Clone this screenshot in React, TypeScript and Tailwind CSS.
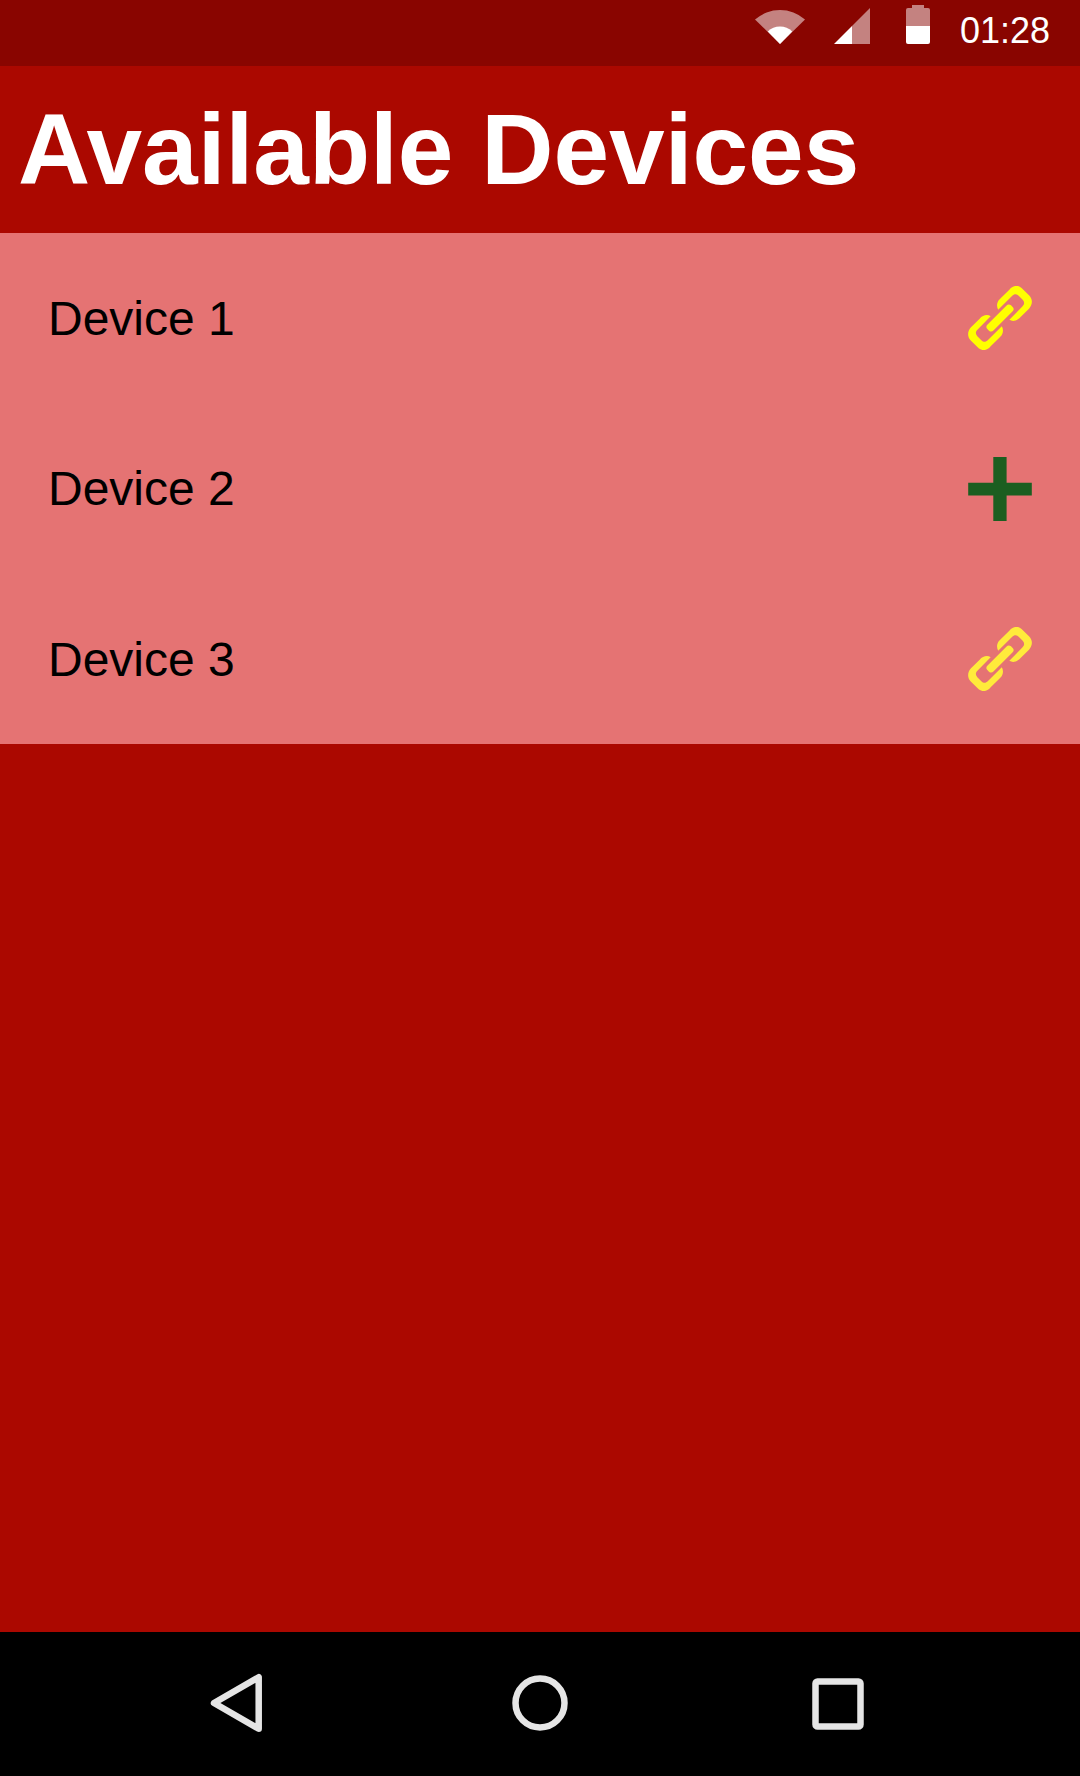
const LINK_HALF =
  'M144.500 119 C140.500 112 140 103 143 97 C145 92 148 89 152 85 L178 59 C189 45 206 44 217 56 L237 76 C249 88 248 104 237 116 L211 142 C202 152 189 156 178 149.500 L217 109.500 C224 103 224 96 218 89.500 L206 77.500 C199 70.500 193 71 186 78 Z';

function LinkIcon({ className }: { className: string }) {
  return (
    <svg viewBox="54 48 192 192" className={className} fill="currentColor">
      <path d={LINK_HALF} />
      <path d={LINK_HALF} transform="rotate(180 150 144)" />
      <path
        d="M169 107 C173 102.500 179 102 183 106 L188 111 C192 115 192 120 188 124 L131 181 C127 185.500 121 186 117 182 L112 177 C108 173 108 168 112 164 Z"
      />
    </svg>
  );
}

function PlusIcon({ className }: { className: string }) {
  return (
    <svg viewBox="0 0 64 64" className={className} fill="currentColor">
      <path d="M25.300 0H38.600V25.700H63.800V38.600H38.600V64H25.300V38.600H0.200V25.700H25.300Z" />
    </svg>
  );
}

function StatusBar() {
  return (
    <header className="flex h-[66px] items-start justify-end bg-[#890500] pr-[30px] text-white">
      <svg viewBox="0 0 50 35" className="mt-[9px] h-[35px] w-[50px]" fill="currentColor">
        <path d="M0 10.500A38 38 0 0 1 50 10.500L25 35Z" fillOpacity="0.5" />
        <path d="M12.800 22.500A17.500 17.500 0 0 1 37.200 22.500L25 35Z" />
      </svg>
      <svg viewBox="0 0 36 36" className="mt-2 ml-[29px] h-9 w-9" fill="currentColor">
        <path d="M36 0V36H18V18Z" fillOpacity="0.5" />
        <path d="M0 36L18 18V36Z" />
      </svg>
      <svg viewBox="0 0 24 39" className="mt-[5px] ml-9 h-[39px] w-6" fill="currentColor">
        <path d="M0 21V5Q0 3 2 3H6V0H18V3H22Q24 3 24 5V21Z" fillOpacity="0.5" />
        <path d="M0 21H24V37Q24 39 22 39H2Q0 39 0 37Z" />
      </svg>
      <time className="mt-[11px] ml-[30px] text-[36px] leading-[40px]">01:28</time>
    </header>
  );
}

const devices = [
  { name: 'Device 1', icon: <LinkIcon className="size-16 text-[#ffff00]" /> },
  { name: 'Device 2', icon: <PlusIcon className="mt-px size-16 text-[#1b5e20]" /> },
  { name: 'Device 3', icon: <LinkIcon className="size-16 text-[#ffeb3b]" /> },
];

function NavigationBar() {
  return (
    <nav className="flex h-36 items-center bg-black pb-[2px] pl-[210px] text-[#e5e5e5]">
      <svg viewBox="0 0 53 60" className="h-[60px] w-[53px]" fill="none" stroke="currentColor" strokeWidth="6.500" strokeLinejoin="round">
        <path d="M4 30L48.700 4.200V55.800Z" />
      </svg>
      <svg viewBox="0 0 56 56" className="ml-[249px] size-14" fill="none" stroke="currentColor" strokeWidth="6.500">
        <circle cx="28" cy="28" r="24.500" />
      </svg>
      <svg viewBox="0 0 52 52" className="mt-[2px] ml-[244px] size-[52px]" fill="none" stroke="currentColor" strokeWidth="6.500">
        <rect x="3.500" y="3.500" width="45" height="45" rx="2" />
      </svg>
    </nav>
  );
}

export default function App() {
  return (
    <div className="flex h-[1776px] w-[1080px] flex-col bg-[#ab0800] font-['Liberation_Sans',Arial,sans-serif]">
      <StatusBar />
      <h1 className="h-[167px] pt-[26px] pl-[18px] text-[100px] leading-[115px] font-bold text-white">Available Devices</h1>
      <ul className="grid h-[511px] grid-rows-3 bg-[#e57373] text-[48px] text-black">
        {devices.map(({ name, icon }) => (
          <li key={name} className="flex items-center justify-between px-12">
            <span className="pt-[2px]">{name}</span>
            {icon}
          </li>
        ))}
      </ul>
      <main className="flex-1" />
      <NavigationBar />
    </div>
  );
}
